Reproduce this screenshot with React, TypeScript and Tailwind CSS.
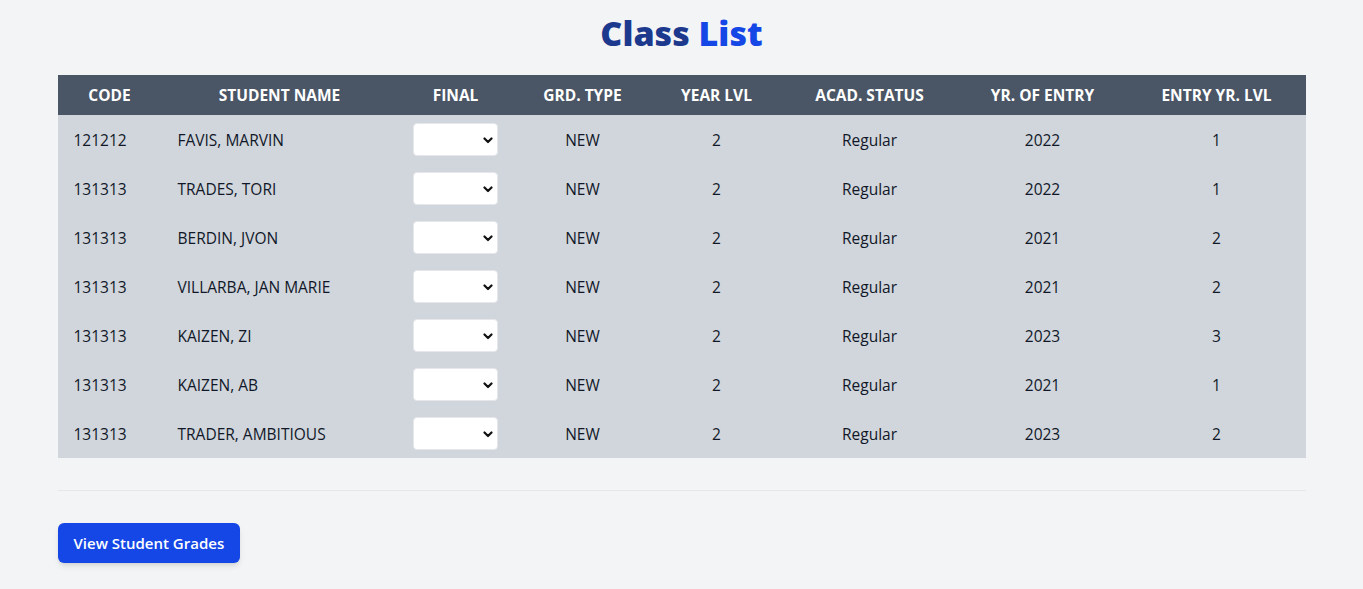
import React from "react";

const rows = [
  ["121212", "FAVIS, MARVIN", "NEW", "2", "Regular", "2022", "1"],
  ["131313", "TRADES, TORI", "NEW", "2", "Regular", "2022", "1"],
  ["131313", "BERDIN, JVON", "NEW", "2", "Regular", "2021", "2"],
  ["131313", "VILLARBA, JAN MARIE", "NEW", "2", "Regular", "2021", "2"],
  ["131313", "KAIZEN, ZI", "NEW", "2", "Regular", "2023", "3"],
  ["131313", "KAIZEN, AB", "NEW", "2", "Regular", "2021", "1"],
  ["131313", "TRADER, AMBITIOUS", "NEW", "2", "Regular", "2023", "2"],
];

const headers = ["CODE", "STUDENT NAME", "FINAL", "GRD. TYPE", "YEAR LVL", "ACAD. STATUS", "YR. OF ENTRY", "ENTRY YR. LVL"];
const widths = [104, 236, 116, 138, 130, 176, 170, 178];

function Select() {
  return (
    <div className="relative w-[85px] h-[33px] bg-white rounded border border-gray-200">
      <select className="appearance-none w-full h-full bg-transparent outline-none" />
      <svg className="absolute right-[4px] top-[13px] pointer-events-none" width="10" height="7" viewBox="0 0 10 7">
        <path d="M1.5 1.5 L5 5 L8.5 1.5" fill="none" stroke="#111" strokeWidth="2.2" strokeLinecap="round" strokeLinejoin="round" />
      </svg>
    </div>
  );
}

export default function App() {
  return (
    <div className="min-h-screen bg-gray-100" style={{ fontFamily: '"Open Sans", "Noto Sans", sans-serif' }}>
      <div className="max-w-7xl mx-auto px-4 pt-[15px]">
        <h1 className="text-center text-[34px] font-extrabold mb-[24px] leading-9">
          <span className="text-blue-900">Class</span> <span className="text-blue-700">List</span>
        </h1>
        <table className="w-full table-fixed border-collapse text-[15.5px]">
          <colgroup>
            {widths.map((w, i) => (
              <col key={i} style={{ width: w }} />
            ))}
          </colgroup>
          <thead>
            <tr className="bg-gray-600 text-white h-10">
              {headers.map((h) => (
                <th key={h} className="px-4 pt-[2px] font-bold text-center whitespace-nowrap">{h}</th>
              ))}
            </tr>
          </thead>
          <tbody className="bg-gray-300 text-gray-900">
            {rows.map((r, i) => (
              <tr key={i} className="h-[49px]">
                <td className="px-4 pt-[2px] text-left">{r[0]}</td>
                <td className="px-4 pt-[2px] text-left whitespace-nowrap">{r[1]}</td>
                <td className="pl-[15px] pr-4 py-2"><Select /></td>
                <td className="px-4 pt-[2px] text-center">{r[2]}</td>
                <td className="px-4 pt-[2px] text-center">{r[3]}</td>
                <td className="px-4 pt-[2px] text-center">{r[4]}</td>
                <td className="px-4 pt-[2px] text-center">{r[5]}</td>
                <td className="px-4 pt-[2px] text-center">{r[6]}</td>
              </tr>
            ))}
          </tbody>
        </table>
        <div className="mt-8 border-t border-gray-200" />
        <div className="pt-8">
          <button className="bg-blue-700 text-white text-[15px] font-semibold rounded-md shadow-md px-4 h-[40px]">
            View Student Grades
          </button>
        </div>
      </div>
    </div>
  );
}
